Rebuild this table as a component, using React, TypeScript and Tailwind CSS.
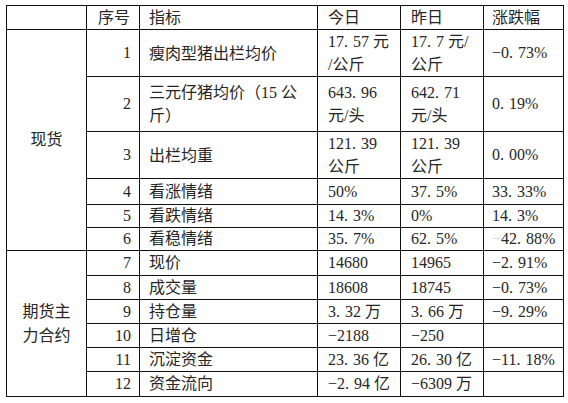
import React from "react";

function F({ s }: { s: string }) {
  const parts: React.ReactNode[] = [];
  let buf = "";
  s.replace(/-/g, "−")
    .split("")
    .forEach((ch, i) => {
      if (ch === ".") {
        if (buf) parts.push(buf);
        buf = "";
        parts.push(
          <span key={i} className="inline-block w-[9px]">
            .
          </span>
        );
      } else if (ch === "\n") {
        if (buf) parts.push(buf);
        buf = "";
        parts.push(<br key={i} />);
      } else {
        buf += ch;
      }
    });
  if (buf) parts.push(buf);
  return <>{parts}</>;
}

type Row = {
  h: string;
  n: string;
  name: string;
  t: string;
  y: string;
  c: string;
};

const rows: Row[] = [
  { h: "h-[47px]", n: "1", name: "瘦肉型猪出栏均价", t: "17.57 元\n/公斤", y: "17.7 元/\n公斤", c: "-0.73%" },
  { h: "h-[55px]", n: "2", name: "三元仔猪均价（15 公\n斤）", t: "643.96\n元/头", y: "642.71\n元/头", c: "0.19%" },
  { h: "h-[46px]", n: "3", name: "出栏均重", t: "121.39\n公斤", y: "121.39\n公斤", c: "0.00%" },
  { h: "h-[26px]", n: "4", name: "看涨情绪", t: "50%", y: "37.5%", c: "33.33%" },
  { h: "h-[23px]", n: "5", name: "看跌情绪", t: "14.3%", y: "0%", c: "14.3%" },
  { h: "h-[23px]", n: "6", name: "看稳情绪", t: "35.7%", y: "62.5%", c: "NEG42.88%" },
  { h: "h-[25px]", n: "7", name: "现价", t: "14680", y: "14965", c: "-2.91%" },
  { h: "h-[24px]", n: "8", name: "成交量", t: "18608", y: "18745", c: "-0.73%" },
  { h: "h-[24px]", n: "9", name: "持仓量", t: "3.32 万", y: "3.66 万", c: "-9.29%" },
  { h: "h-[24px]", n: "10", name: "日增仓", t: "-2188", y: "-250", c: "" },
  { h: "h-[24px]", n: "11", name: "沉淀资金", t: "23.36 亿", y: "26.30 亿", c: "-11.18%" },
  { h: "h-[25px]", n: "12", name: "资金流向", t: "-2.94 亿", y: "-6309 万", c: "" },
];

const cell = "border border-[#111] align-middle p-0 leading-[18px]";
const multi = "leading-[23px]";

export default function App() {
  return (
    <div
      className="bg-white w-[568px] h-[403px] pt-[5px] pl-[6px] text-[#262626] text-[16px]"
      style={{ fontFamily: '"Liberation Serif", "Noto Sans CJK SC", serif' }}
    >
      <table className="border-collapse table-fixed w-[557px]">
        <colgroup>
          <col className="w-[80px]" />
          <col className="w-[53px]" />
          <col className="w-[178px]" />
          <col className="w-[83px]" />
          <col className="w-[83px]" />
          <col className="w-[80px]" />
        </colgroup>
        <tbody>
          <tr className="h-[24px]">
            <td className={cell}></td>
            <td className={`${cell} text-right pr-[9px]`}>序号</td>
            <td className={`${cell} pl-[9px]`}>指标</td>
            <td className={`${cell} pl-[10px]`}>今日</td>
            <td className={`${cell} pl-[10px]`}>昨日</td>
            <td className={`${cell} pl-[8px]`}>涨跌幅</td>
          </tr>
          {rows.map((r, i) => {
            const lm = i < 3 ? multi : "";
            return (
              <tr key={r.n} className={r.h}>
                {i === 0 && (
                  <td rowSpan={6} className={`${cell} text-center`}>
                    现货
                  </td>
                )}
                {i === 6 && (
                  <td rowSpan={6} className={`${cell} text-center !leading-[24px]`}>
                    期货主
                    <br />
                    力合约
                  </td>
                )}
                <td className={`${cell} text-right pr-[8px]`}>{r.n}</td>
                <td className={`${cell} ${lm} pl-[9px]`}>
                  <F s={r.name} />
                </td>
                <td className={`${cell} ${lm} pl-[10px]`}>
                  <F s={r.t} />
                </td>
                <td className={`${cell} ${lm} pl-[10px]`}>
                  <F s={r.y} />
                </td>
                <td className={`${cell} pl-[8px]`}>
                  {r.c.startsWith("NEG") ? (
                    <>
                      <span className="text-[#d0d0d0]">−</span>
                      <F s={r.c.slice(3)} />
                    </>
                  ) : (
                    <F s={r.c} />
                  )}
                </td>
              </tr>
            );
          })}
        </tbody>
      </table>
    </div>
  );
}
